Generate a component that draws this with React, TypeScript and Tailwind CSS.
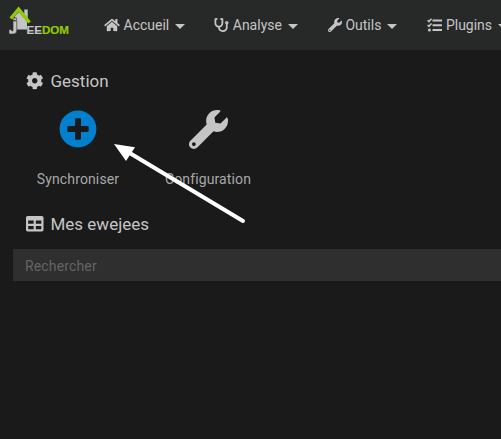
import type { ReactNode } from 'react';
import { FaCog, FaHome, FaPlusCircle, FaStethoscope, FaTable, FaWrench } from 'react-icons/fa';

function Logo() {
  return (
    <svg className="ml-[9px] h-[30px] w-[62px] shrink-0" viewBox="0 0 62 30" aria-label="Jeedom">
      <path d="M15.300 3.500h3.400v10h-3.400z" fill="#c3c5c5" />
      <path d="M6 10l4-4 8 9.500v8H7z" fill="#c3c5c5" />
      <path d="M4 15h3.800v9.500q0 3.500-3.500 3.500H0v-4.500h2.500v1.300H4z" fill="#c3c5c5" stroke="#272928" strokeWidth=".6" />
      <path d="M4 12h3.600v2.400H4z" fill="#c3c5c5" stroke="#272928" strokeWidth=".6" />
      <path d="M1.800 12.500L9.600 3.200l11 13.300" fill="none" stroke="#94ca02" strokeWidth="3.400" />
      <text x="17.500" y="28" fontFamily="Liberation Sans, Arial, sans-serif" fontWeight="700" fontSize="11.500" strokeWidth=".2" textLength="42.500" lengthAdjust="spacingAndGlyphs">
        <tspan fill="#c3c5c5" stroke="#c3c5c5">EE</tspan>
        <tspan fill="#94ca02" stroke="#94ca02">DOM</tspan>
      </text>
    </svg>
  );
}

function ChecklistIcon() {
  return (
    <svg className="h-[14px] w-[15px] shrink-0" viewBox="0 0 15 14" fill="none" stroke="currentColor">
      <path d="M5.500 2.500H15M5.500 7.300H15M5.500 12H15" strokeWidth="2" />
      <path d="M.6 2.300l1.300 1.300L4.500.8M.6 7l1.300 1.300 2.600-2.800" strokeWidth="1.500" />
      <circle cx="2.400" cy="12" r="1.500" fill="currentColor" stroke="none" />
    </svg>
  );
}

function NavItem({ icon, label, className }: { icon: ReactNode; label: string; className: string }) {
  return (
    <div className={`flex shrink-0 items-center text-sm leading-5 ${className}`}>
      {icon}
      <span className="ml-[3.5px]">{label}</span>
      <span className="mt-[3px] ml-[6px] h-0 w-0 border-x-[5px] border-t-[5px] border-x-transparent border-t-[#c5c5c5]" />
    </div>
  );
}

function Action({ icon, label }: { icon: ReactNode; label: string }) {
  return (
    <div className="flex w-[130px] flex-col items-center">
      <div className="flex h-[38px] items-center">{icon}</div>
      <span className="mt-[21px] text-sm leading-5 tracking-[0.13px] text-[#a8a8a8]">{label}</span>
    </div>
  );
}

function Title({ icon, label }: { icon: ReactNode; label: string }) {
  return (
    <h2 className="ml-[26px] flex h-5 items-center gap-[7px] text-[17px] leading-5 font-normal">
      {icon}
      <span>{label}</span>
    </h2>
  );
}

export default function App() {
  return (
    <div className="relative h-[439px] w-[501px] overflow-hidden bg-[#1a1a1a] font-['Roboto',sans-serif] text-[#c5c5c5]">
      <header className="flex h-[50px] items-center overflow-hidden bg-[#272928] whitespace-nowrap">
        <div className="-mt-[8px] flex"><Logo /></div>
        <NavItem className="ml-[33px]" icon={<FaHome className="h-[14px] w-[16px]" />} label="Accueil" />
        <NavItem className="ml-[29px]" icon={<FaStethoscope className="h-[14px] w-[15px]" />} label="Analyse" />
        <NavItem className="ml-[30px]" icon={<FaWrench className="size-[14px]" />} label="Outils" />
        <NavItem className="ml-[30px]" icon={<ChecklistIcon />} label="Plugins" />
      </header>
      <main className="pt-[21px]">
        <Title icon={<FaCog className="size-[17.5px]" />} label="Gestion" />
        <div className="mt-[19px] ml-[13px] flex">
          <Action icon={<FaPlusCircle className="size-[38px] text-[#0280d0]" />} label="Synchroniser" />
          <Action icon={<FaWrench className="size-[39px]" />} label="Configuration" />
        </div>
        <div className="mt-[25px]">
          <Title icon={<FaTable className="size-[17.5px]" />} label="Mes ewejees" />
        </div>
        <input
          className="mt-[15px] ml-[13px] block h-8 w-[488px] bg-[#2f2f2f] px-3 pt-[2px] text-sm tracking-[0.15px] outline-none placeholder:text-[#656565]"
          placeholder="Rechercher"
        />
      </main>
      <svg className="pointer-events-none absolute top-[140px] left-[110px]" width="140" height="86" viewBox="0 0 140 86" fill="#fff">
        <path d="M18 12L133 81" stroke="#fff" strokeWidth="4" strokeLinecap="round" />
        <path d="M4 4l21 3.300-9 13.700z" />
      </svg>
    </div>
  );
}
